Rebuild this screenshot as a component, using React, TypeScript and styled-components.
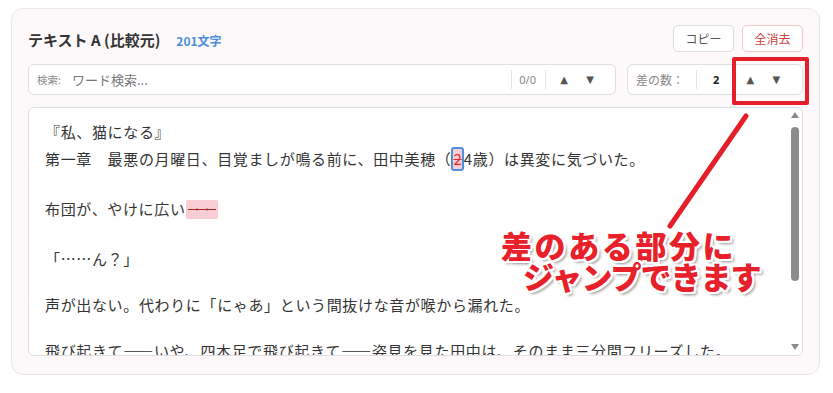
import styled, { createGlobalStyle } from "styled-components";

const GlobalStyle = createGlobalStyle`
  body {
    margin: 0;
    background: #ffffff;
    font-family: "Noto Sans CJK JP", "Noto Sans", sans-serif;
    color: #333;
  }
`;

const Page = styled.div`
  padding: 8px 13px 0 11px;
`;

const Card = styled.section`
  position: relative;
  box-sizing: border-box;
  width: 809px;
  height: 367px;
  padding: 16px;
  border: 1px solid #ebe5e6;
  border-radius: 12px;
  background: #fdf9fa;
  display: flex;
  flex-direction: column;
  gap: 12px;
`;

const Header = styled.div`
  display: flex;
  align-items: center;
  justify-content: space-between;
  height: 27px;
`;

const TitleGroup = styled.div`
  display: flex;
  align-items: baseline;
  gap: 16px;
  padding-top: 1px;
`;

const Title = styled.h2`
  margin: 0;
  font-size: 15px;
  font-weight: 700;
  color: #333;
`;

const CharCount = styled.span`
  font-size: 12px;
  font-weight: 700;
  color: #4a90d9;
`;

const Actions = styled.div`
  display: flex;
  gap: 8px;
`;

const Button = styled.button<{ $danger?: boolean }>`
  width: 61px;
  height: 27px;
  border-radius: 5px;
  border: 1px solid ${(p) => (p.$danger ? "#f1caca" : "#dddddd")};
  background: #ffffff;
  color: ${(p) => (p.$danger ? "#c94040" : "#555")};
  font-family: inherit;
  font-size: 12px;
  padding: 0;
`;

const ToolRow = styled.div`
  display: flex;
  gap: 11px;
  height: 31px;
`;

const Box = styled.div<{ $width?: number; $padRight?: number }>`
  box-sizing: border-box;
  ${(p) => (p.$width ? `width: ${p.$width}px;` : "flex: 1;")}
  display: flex;
  align-items: center;
  border: 1px solid #dedede;
  border-radius: 6px;
  background: #ffffff;
  padding: 0 ${(p) => p.$padRight ?? 8}px 0 8px;
`;

const FieldLabel = styled.span<{ $size: number }>`
  font-size: ${(p) => p.$size}px;
  color: #888;
  white-space: nowrap;
`;

const SearchInput = styled.input`
  flex: 1;
  min-width: 0;
  margin-left: 9px;
  border: none;
  outline: none;
  background: transparent;
  font-family: inherit;
  font-size: 13px;
  color: #333;
  &::placeholder {
    color: #777;
  }
`;

const Divider = styled.span<{ $l: number; $r: number }>`
  width: 1px;
  height: 19px;
  background: #e4e4e4;
  margin: 0 ${(p) => p.$r}px 0 ${(p) => p.$l}px;
`;

const Counter = styled.span<{ $bold?: boolean }>`
  font-size: 11px;
  color: ${(p) => (p.$bold ? "#222" : "#888")};
  font-weight: ${(p) => (p.$bold ? 700 : 400)};
  font-family: "Noto Sans", sans-serif;
`;

const ArrowGroup = styled.div<{ $ml: number }>`
  display: flex;
  gap: 12px;
  margin-left: ${(p) => p.$ml}px;
`;

const ArrowButton = styled.button`
  border: none;
  background: none;
  padding: 0;
  width: 14px;
  font-size: 10px;
  color: #555;
  font-family: "DejaVu Sans", sans-serif;
`;

const Editor = styled.div`
  box-sizing: border-box;
  height: 249px;
  display: flex;
  border: 1px solid #dedede;
  border-radius: 6px;
  background: #ffffff;
  overflow: hidden;
`;

const Content = styled.div`
  flex: 1;
  overflow: hidden;
  padding: 11.5px 16px 0 16px;
  font-size: 15px;
  letter-spacing: 0.65px;
  line-height: 23px;
  color: #333;
`;

const Line = styled.div<{ $top?: number; $bottom?: number }>`
  height: 23px;
  padding-top: ${(p) => p.$top ?? 0}px;
  padding-bottom: ${(p) => p.$bottom ?? 0}px;
  white-space: nowrap;
`;

const ChangedChar = styled.span`
  display: inline-block;
  vertical-align: middle;
  line-height: 20px;
  margin-top: -3px;
  padding: 0;
  border: 2px solid #4d90e0;
  border-radius: 3px;
  background: #f8cdd3;
  color: #e03030;
  text-decoration: line-through;
  letter-spacing: 0;
`;

const Deleted = styled.span`
  display: inline-block;
  width: 32px;
  height: 19px;
  vertical-align: -4px;
  border-radius: 2px;
  background: #f8cdd3;
  svg {
    display: block;
  }
`;

const ScrollTrack = styled.div`
  width: 12px;
  margin-right: 1px;
  display: flex;
  flex-direction: column;
  align-items: center;
  padding: 4px 0 5px;
`;

const ScrollArrow = styled.span<{ $down?: boolean }>`
  width: 0;
  height: 0;
  border-left: 4.5px solid transparent;
  border-right: 4.5px solid transparent;
  ${(p) =>
    p.$down
      ? "border-top: 6px solid #8a8a8a; margin-top: auto;"
      : "border-bottom: 6px solid #8a8a8a;"}
`;

const Thumb = styled.span`
  width: 8px;
  height: 154px;
  margin-top: 9px;
  border-radius: 4px;
  background: #8d8d8d;
`;

const HighlightFrame = styled.div`
  position: absolute;
  left: 720px;
  top: 48px;
  width: 77px;
  height: 48px;
  box-sizing: border-box;
  border: 4px solid #e51f2a;
  border-radius: 2px;
  pointer-events: none;
`;

const Pointer = styled.svg`
  position: absolute;
  left: 650px;
  top: 101px;
  overflow: visible;
  pointer-events: none;
`;

const Callout = styled.div`
  position: absolute;
  left: 489px;
  top: 220px;
  font-size: 31px;
  font-weight: 900;
  line-height: 31px;
  color: #e8202a;
  white-space: nowrap;
  pointer-events: none;
  text-shadow:
    2px 0 0 #fff, -2px 0 0 #fff, 0 2px 0 #fff, 0 -2px 0 #fff,
    2px 2px 0 #fff, -2px -2px 0 #fff, 2px -2px 0 #fff, -2px 2px 0 #fff,
    3px 3px 3px rgba(0, 0, 0, 0.45);
`;

const CalloutLine = styled.div<{ $indent?: number; $spacing: number }>`
  padding-left: ${(p) => p.$indent ?? 0}px;
  letter-spacing: ${(p) => p.$spacing}px;
`;

export default function App() {
  return (
    <>
      <GlobalStyle />
      <Page>
        <Card>
          <Header>
            <TitleGroup>
              <Title>テキスト A (比較元)</Title>
              <CharCount>201文字</CharCount>
            </TitleGroup>
            <Actions>
              <Button>コピー</Button>
              <Button $danger>全消去</Button>
            </Actions>
          </Header>

          <ToolRow>
            <Box $padRight={18}>
              <FieldLabel $size={10.5}>検索:</FieldLabel>
              <SearchInput placeholder="ワード検索..." />
              <Divider $l={4} $r={7} />
              <Counter>0/0</Counter>
              <Divider $l={9} $r={9} />
              <ArrowGroup $ml={2}>
                <ArrowButton>▲</ArrowButton>
                <ArrowButton>▼</ArrowButton>
              </ArrowGroup>
            </Box>
            <Box $width={176}>
              <FieldLabel $size={12}>差の数：</FieldLabel>
              <Divider $l={12} $r={16} />
              <Counter $bold>2</Counter>
              <ArrowGroup $ml={24}>
                <ArrowButton>▲</ArrowButton>
                <ArrowButton>▼</ArrowButton>
              </ArrowGroup>
            </Box>
          </ToolRow>

          <Editor>
            <Content>
              <Line>『私、猫になる』</Line>
              <Line $top={4.5} $bottom={0.5}>
                第一章　最悪の月曜日、目覚ましが鳴る前に、田中美穂（
                <ChangedChar>2</ChangedChar>4歳）は異変に気づいた。
              </Line>
              <Line />
              <Line $top={3.5} $bottom={4}>
                布団が、やけに広い
                <Deleted>
                  <svg width="32" height="19" viewBox="0 0 32 19">
                    <line x1="2" y1="9.5" x2="30" y2="9.5" stroke="#a02a2a" strokeWidth="1" />
                    <circle cx="11" cy="9.5" r="1.1" fill="#a02a2a" />
                    <circle cx="21" cy="9.5" r="1.1" fill="#a02a2a" />
                  </svg>
                </Deleted>
              </Line>
              <Line />
              <Line>「……ん？」</Line>
              <Line />
              <Line>声が出ない。代わりに「にゃあ」という間抜けな音が喉から漏れた。</Line>
              <Line />
              <Line>
                飛び起きて――いや、四本足で飛び起きて――姿見を見た田中は、そのまま三分間フリーズした。
              </Line>
            </Content>
            <ScrollTrack>
              <ScrollArrow />
              <Thumb />
              <ScrollArrow $down />
            </ScrollTrack>
          </Editor>

          <HighlightFrame />
          <Pointer width="90" height="120" viewBox="0 0 90 120">
            <line x1="84" y1="6" x2="8" y2="116" stroke="#e51f2a" strokeWidth="5" strokeLinecap="round" />
          </Pointer>
          <Callout>
            <CalloutLine $spacing={2.6}>差のある部分に</CalloutLine>
            <CalloutLine $indent={22} $spacing={-1}>
              ジャンプできます
            </CalloutLine>
          </Callout>
        </Card>
      </Page>
    </>
  );
}
